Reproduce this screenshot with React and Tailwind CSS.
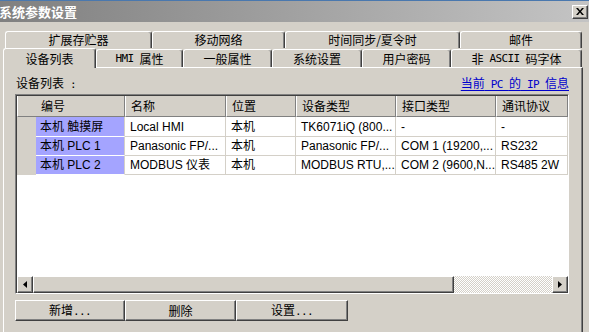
import React from 'react';

const raised =
  'border border-t-white border-l-white border-r-[#404040] border-b-[#404040] shadow-[inset_-1px_-1px_0_#808080]';

const Asc = ({ children }) => (
  <span className="font-['DejaVu_Sans_Mono',monospace] text-[11px] tracking-[-0.6px] whitespace-pre">{children}</span>
);

const BackTab = ({ w, children }) => (
  <div
    className={`${w} h-full shrink-0 flex items-center justify-center border-t border-l border-r border-t-white border-l-white border-r-[#404040] rounded-t-[3px] shadow-[inset_-1px_0_0_#808080] leading-none`}
  >
    {children}
  </div>
);

const FrontTab = ({ w, active, children }) => (
  <div
    className={`${w} ${
      active ? 'h-[20px] -mb-px relative z-10 bg-[#d4d0c8]' : 'h-[18px]'
    } shrink-0 flex items-center justify-center border-t border-l border-r border-t-white border-l-white border-r-[#404040] rounded-t-[3px] shadow-[inset_-1px_0_0_#808080] leading-none`}
  >
    {children}
  </div>
);

const cols = ['w-[108px]', 'w-[101px]', 'w-[70px]', 'w-[100px]', 'w-[100px]', 'w-[72px]'];
const heads = ['编号', '名称', '位置', '设备类型', '接口类型', '通讯协议'];
const rows = [
  { h: 'h-[20px]', cells: ['本机 触摸屏', 'Local HMI', '本机', 'TK6071iQ (800...', '-', '-'] },
  { h: 'h-[19px]', cells: ['本机 PLC 1', 'Panasonic FP/...', '本机', 'Panasonic FP/...', 'COM 1 (19200,...', 'RS232'] },
  { h: 'h-[19px]', cells: ['本机 PLC 2', 'MODBUS 仪表', '本机', 'MODBUS RTU,...', 'COM 2 (9600,N...', 'RS485 2W'] },
];

export default function App() {
  return (
    <div className="w-[589px] h-[332px] overflow-hidden bg-[#d4d0c8] flex flex-col text-[12px] text-black font-['Noto_Sans_CJK_SC',sans-serif]">
      <div className="h-px bg-[#4a78ae]" />
      {/* title bar */}
      <div className="h-[21px] bg-linear-to-r from-[#808080] to-[#c4c4c4] flex items-center justify-between pr-[1px]">
        <span className="text-white font-bold text-[13px] leading-none -ml-px">系统参数设置</span>
        <div className={`${raised} w-[16px] h-[14px] bg-[#d4d0c8] flex items-center justify-center`}>
          <svg width="8" height="7" viewBox="0 0 8 7">
            <path d="M0 0h2l2 2.4L6 0h2L5 3.5 8 7H6L4 4.6 2 7H0l3-3.5z" fill="#000" />
          </svg>
        </div>
      </div>
      <div className="h-[9px]" />
      {/* tabs row 1 */}
      <div className="h-[17px] flex pl-[5px]">
        <BackTab w="w-[147px]">扩展存贮器</BackTab>
        <BackTab w="w-[133px]">移动网络</BackTab>
        <BackTab w="w-[175px]">时间同步/夏令时</BackTab>
        <BackTab w="w-[122px]">邮件</BackTab>
      </div>
      {/* tabs row 2 */}
      <div className="h-[19px] flex items-end pl-[3px]">
        <FrontTab w="w-[93px]" active>设备列表</FrontTab>
        <FrontTab w="w-[87px]">
          <Asc>HMI </Asc>属性
        </FrontTab>
        <FrontTab w="w-[89px]">一般属性</FrontTab>
        <FrontTab w="w-[90px]">系统设置</FrontTab>
        <FrontTab w="w-[89px]">用户密码</FrontTab>
        <FrontTab w="w-[131px]">
          非<Asc> ASCII </Asc>码字体
        </FrontTab>
      </div>
      {/* panel */}
      <div className="flex-1 ml-[3px] w-[580px] border-t border-l border-r border-t-white border-l-white border-r-[#404040] shadow-[inset_-1px_0_0_#808080] pt-[7px] flex flex-col">
        <div className="h-[16px] flex items-center justify-between pl-[12px] pr-[13px] leading-none">
          <span>
            设备列表<Asc> :</Asc>
          </span>
          <span className="text-[#0000cc] underline underline-offset-2">
            当前<Asc> PC </Asc>的<Asc> IP </Asc>信息
          </span>
        </div>
        {/* list view */}
        <div className="mt-[3px] ml-[11px] w-[554px] h-[200px] border border-t-[#808080] border-l-[#808080] border-r-white border-b-white shadow-[inset_1px_1px_0_#404040] pt-px pl-px bg-white flex flex-col">
          <div className="h-[21px] flex shrink-0 bg-[#d4d0c8]">
            {heads.map((h, i) => (
              <div
                key={h}
                className={`${cols[i]} h-full shrink-0 flex items-center border-l border-l-white border-r border-r-[#808080] border-b border-b-[#808080] leading-none ${
                  i === 0 ? 'pl-[23px]' : 'pl-[5px]'
                }`}
              >
                {h}
              </div>
            ))}
          </div>
          {rows.map((r) => (
            <div key={r.cells[0]} className={`${r.h} flex shrink-0 font-['Liberation_Sans','Noto_Sans_CJK_SC',sans-serif] leading-none`}>
              <div className="w-[19px] h-full shrink-0 bg-[#d4d0c8]" />
              <div className="w-[89px] h-full shrink-0 bg-[#a4a4ff] border-b border-b-white border-r border-r-[#d4d0c8] flex items-center pl-[4px] whitespace-nowrap overflow-hidden">
                {r.cells[0]}
              </div>
              {r.cells.slice(1).map((c, i) => (
                <div
                  key={i}
                  className={`${cols[i + 1]} h-full shrink-0 border-b border-r border-[#d4d0c8] flex items-center pl-[5px] whitespace-nowrap overflow-hidden`}
                >
                  {c}
                </div>
              ))}
            </div>
          ))}
          <div className="flex-1" />
          {/* horizontal scrollbar */}
          <div className="h-[17px] flex shrink-0 bg-[#d4d0c8]">
            <div className={`${raised} w-[16px] h-full shrink-0 flex items-center justify-center`}>
              <svg width="4" height="7" viewBox="0 0 4 7">
                <path d="M4 0v7L0 3.5z" fill="#000" />
              </svg>
            </div>
            <div className={`${raised} w-[421px] h-full shrink-0`} />
            <div className="flex-1 h-full bg-[repeating-conic-gradient(#d4d0c8_0_25%,#ffffff_0_50%)] bg-[length:2px_2px]" />
            <div className={`${raised} w-[16px] h-full shrink-0 flex items-center justify-center`}>
              <svg width="4" height="7" viewBox="0 0 4 7">
                <path d="M0 0v7l4-3.5z" fill="#000" />
              </svg>
            </div>
          </div>
        </div>
        {/* buttons */}
        <div className="mt-[6px] ml-[11px] flex">
          <button className={`${raised} w-[110px] h-[21px] bg-[#d4d0c8] leading-none`}>
            新增<Asc>...</Asc>
          </button>
          <button className={`${raised} w-[111px] h-[21px] bg-[#d4d0c8] leading-none`}>删除</button>
          <button className={`${raised} w-[112px] h-[21px] bg-[#d4d0c8] leading-none`}>
            设置<Asc>...</Asc>
          </button>
        </div>
      </div>
    </div>
  );
}
